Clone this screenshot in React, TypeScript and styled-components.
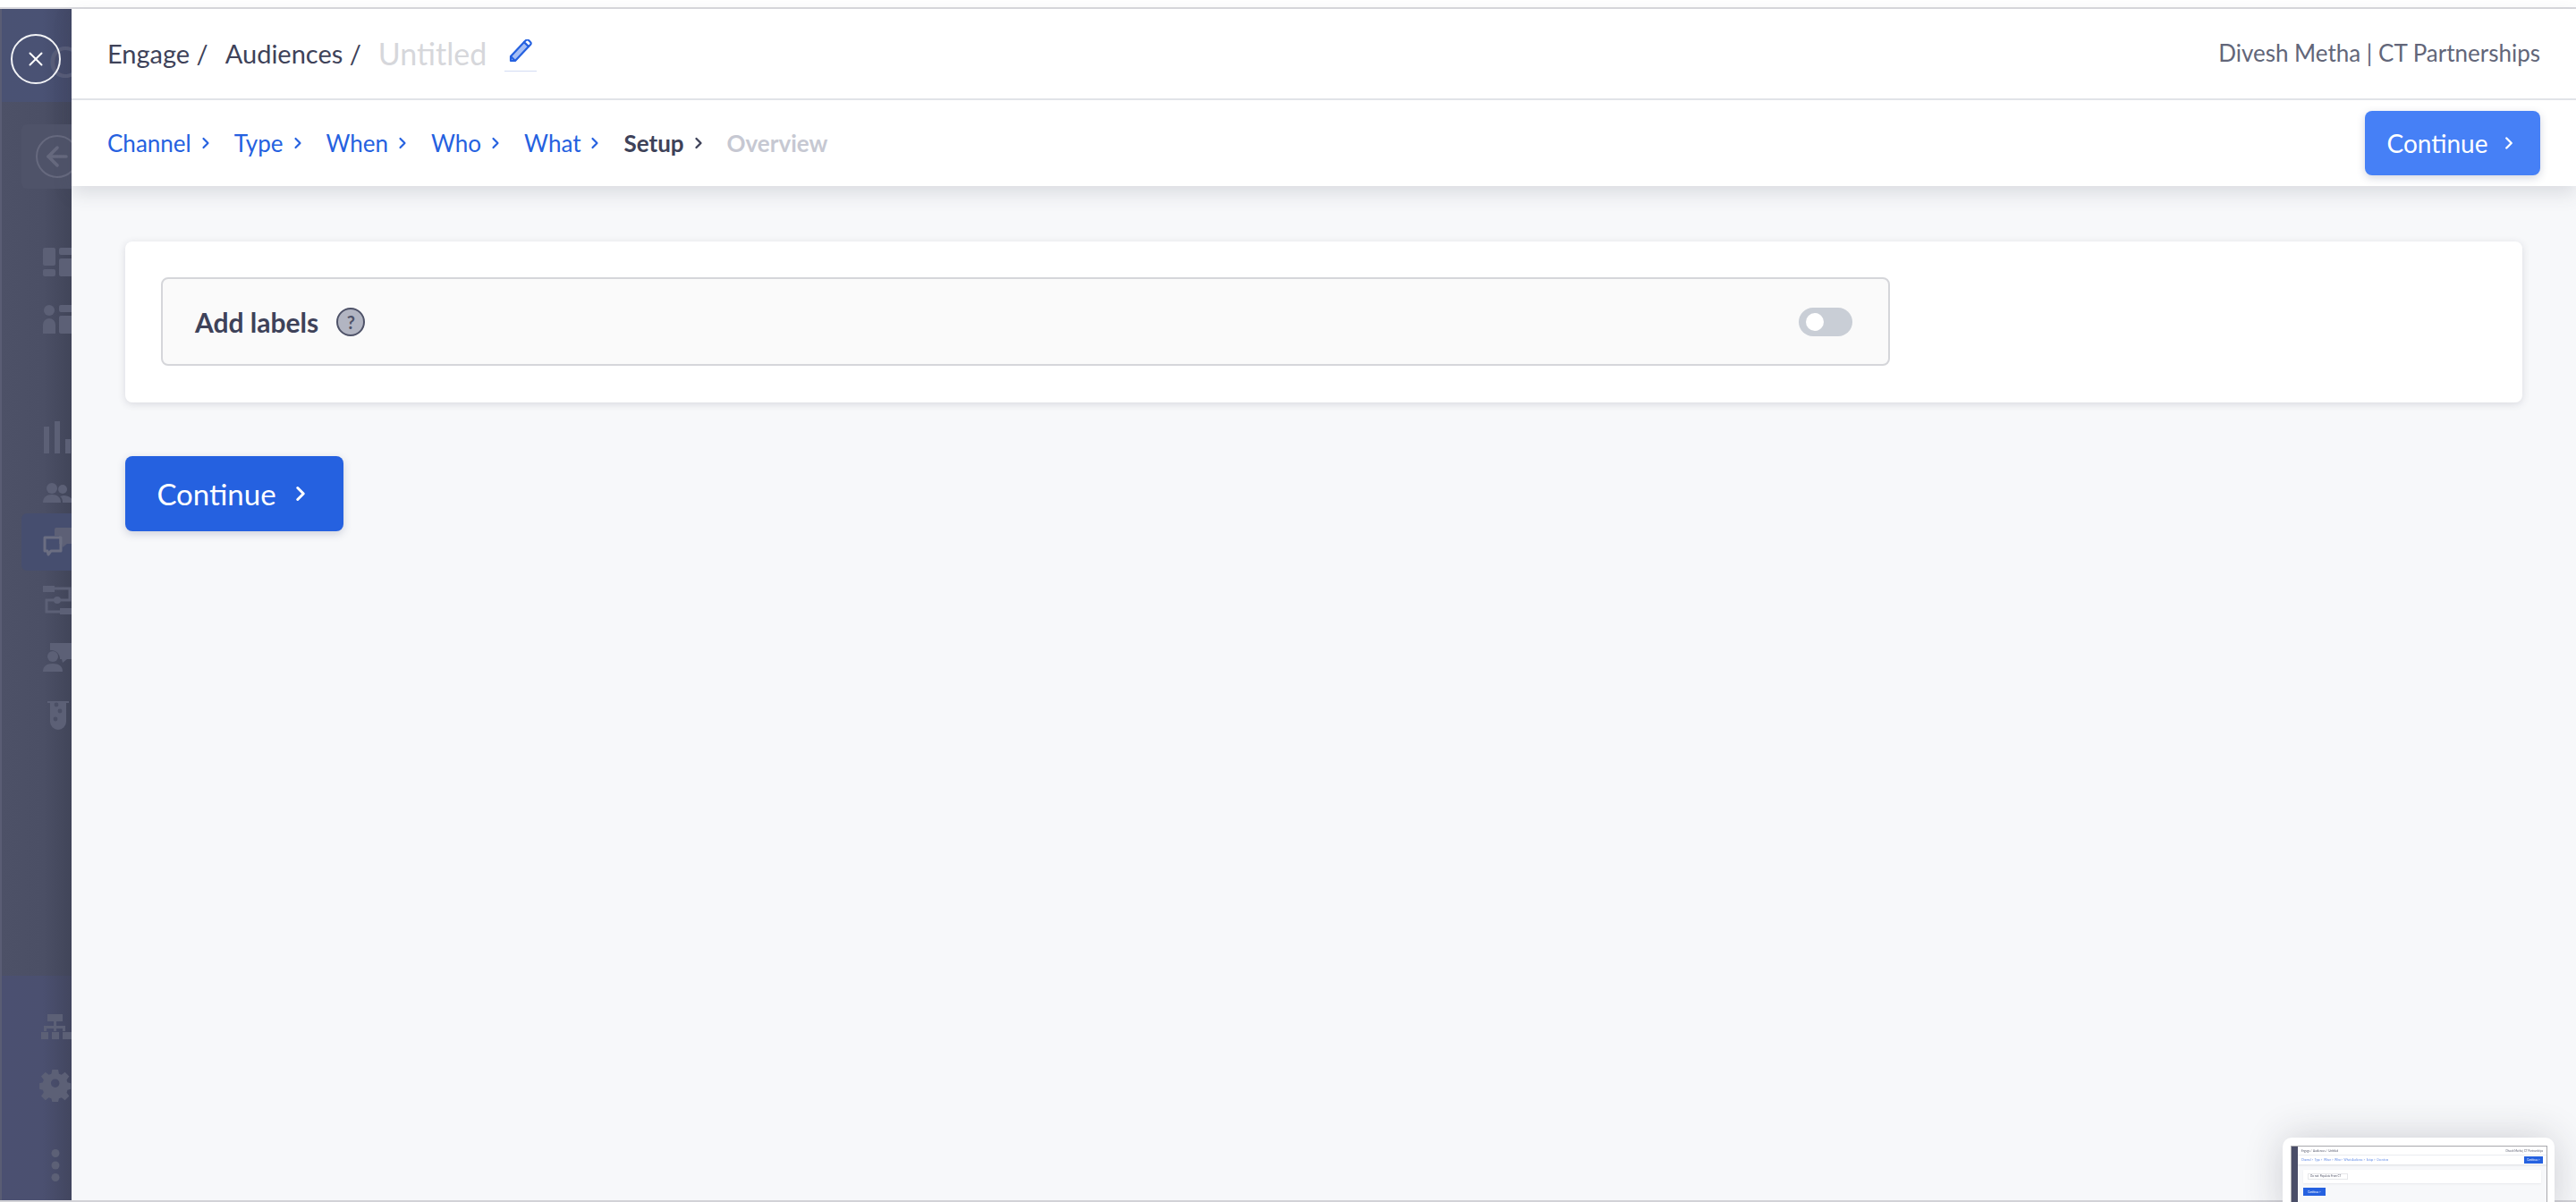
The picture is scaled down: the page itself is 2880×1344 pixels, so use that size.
import React from 'react';
import styled, { createGlobalStyle } from 'styled-components';
import { X, ArrowLeft, ChevronRight } from 'lucide-react';

const GlobalStyle = createGlobalStyle`
	html, body {
		margin: 0;
		padding: 0;
		background: #fff;
		font-family: "Lato", "Open Sans", sans-serif;
	}
	* {
		box-sizing: border-box;
	}
`

const Page = styled.div`
	position: relative;
	width: 2880px;
	height: 1344px;
	overflow: hidden;
	padding-top: 8px;
	display: flex;
	flex-direction: column;
`

const TopLine = styled.div`
	height: 2px;
	flex: none;
	background: #d9d9de;
`

const BottomLine = styled.div`
	height: 2px;
	flex: none;
	background: #d2d2d7;
`

const Shell = styled.div`
	flex: 1;
	display: flex;
	min-height: 0;
`

/* dimmed app nav that sits behind the drawer */
const Rail = styled.aside`
	position: relative;
	width: 80px;
	flex: none;
	overflow: hidden;
	display: flex;
	flex-direction: column;
	border-left: 2px solid #5a5d74;
	background: linear-gradient(90deg, #4d5167 0%, #4b4f65 60%, #414559 100%);
`

const RailTop = styled.div`
	height: 104px;
	flex: none;
	margin-left: -2px;
	position: relative;
	display: flex;
	align-items: flex-start;
	background: linear-gradient(90deg, #4a5273 0%, #4a5274 60%, #424866 100%);
`

const CloseRing = styled.div`
	position: absolute;
	left: 12px;
	top: 28px;
	width: 56px;
	height: 56px;
	border-radius: 50%;
	border: 2px solid #f2f3f6;
	color: #fff;
	display: flex;
	align-items: center;
	justify-content: center;
`

const GhostLetter = styled.span`
	position: absolute;
	left: 54px;
	top: 30px;
	font-size: 48px;
	color: #575c78;
`

const BackBox = styled.div`
	margin: 25px 0 0 22px;
	width: 80px;
	height: 72px;
	flex: none;
	border-radius: 6px;
	background: #4f5369;
	color: #66697e;
	display: flex;
	align-items: center;
	padding-left: 16px;
`

const BackCircle = styled.div`
	width: 48px;
	height: 48px;
	flex: none;
	border-radius: 50%;
	border: 2px solid #66697e;
	display: flex;
	align-items: center;
	justify-content: center;
`

const RailIcon = styled.svg<{ $top: number }>`
	display: block;
	flex: none;
	margin-top: ${(p) => p.$top}px;
	margin-left: 46px;
	overflow: visible;
	fill: #5c6076;
`

const ActiveItem = styled.div`
	margin: 12px 0 0 22px;
	width: 80px;
	height: 64px;
	flex: none;
	border-radius: 6px;
	background: #464e6f;
	padding: 16px 0 0 24px;
`

const RailBottom = styled.div`
	position: absolute;
	left: -2px;
	right: 0;
	bottom: 0;
	height: 251px;
	background: linear-gradient(90deg, #4b5071 0%, #4b5070 60%, #42465f 100%);
	padding-top: 43px;
`

const Main = styled.main`
	flex: 1;
	min-width: 0;
	background: #f7f8fa;
	display: flex;
	flex-direction: column;
`

const Header = styled.header`
	flex: none;
	background: #fff;
	box-shadow: 0 8px 20px rgba(70, 74, 95, 0.16);
	position: relative;
`

const TitleRow = styled.div`
	height: 102px;
	border-bottom: 2px solid #e1e3e8;
	padding: 0 40px;
	display: flex;
	align-items: center;
	color: #3e4259;
`

const Crumb = styled.span`
	font-size: 29px;
	margin-right: 19px;
	white-space: pre;
	position: relative;
	top: -1px;
`

const DraftName = styled.span`
	font-size: 34px;
	color: #d6d7db;
	position: relative;
	top: -1px;
`

const EditButton = styled.span`
	margin-left: 20px;
	width: 36px;
	height: 36px;
	flex: none;
	display: flex;
	align-items: flex-start;
	justify-content: center;
	border-bottom: 1px solid #d3dcf3;
	position: relative;
	top: 2px;
`

const Account = styled.span`
	margin-left: auto;
	font-size: 26px;
	color: #626679;
	position: relative;
	top: -1px;
`

const StepRow = styled.div`
	height: 96px;
	padding: 0 40px;
	display: flex;
	align-items: center;
`

const Step = styled.span<{ $state: 'done' | 'current' | 'next' }>`
	display: flex;
	align-items: center;
	gap: 6px;
	margin-right: 22px;
	font-size: 26px;
	font-weight: ${(p) => (p.$state === 'done' ? 400 : 700)};
	color: ${(p) => (p.$state === 'done' ? '#2561e0' : p.$state === 'current' ? '#3e4259' : '#c6c8d2')};
`

const Button = styled.button<{ $size: 'sm' | 'lg' }>`
	display: flex;
	align-items: center;
	justify-content: center;
	border: 0;
	border-radius: 8px;
	color: #fff;
	font-family: inherit;
	background: ${(p) => (p.$size === 'sm' ? '#4680f6' : '#2561e0')};
	width: ${(p) => (p.$size === 'sm' ? '196px' : '244px')};
	height: ${(p) => (p.$size === 'sm' ? '72px' : '84px')};
	font-size: ${(p) => (p.$size === 'sm' ? '28px' : '33px')};
	gap: ${(p) => (p.$size === 'sm' ? '12px' : '14px')};
	box-shadow: 0 3px 10px rgba(60, 70, 110, 0.22);
`

const TopButton = styled(Button)`
	margin-left: auto;
`

const Content = styled.div`
	padding: 62px 60px 0;
`

const Card = styled.section`
	width: 2680px;
	height: 180px;
	background: #fff;
	border-radius: 8px;
	padding: 40px;
	box-shadow: 0 2px 8px rgba(60, 64, 90, 0.16);
`

const LabelPanel = styled.div`
	width: 1933px;
	height: 99px;
	background: #fafafa;
	border: 2px solid #d5d6da;
	border-radius: 8px;
	padding: 0 40px 0 36px;
	display: flex;
	align-items: center;
`

const LabelText = styled.span`
	font-size: 30px;
	font-weight: 700;
	color: #3e4259;
`

const HelpBadge = styled.span`
	margin-left: 20px;
	width: 32px;
	height: 32px;
	flex: none;
	border-radius: 50%;
	background: #b2b5c2;
	border: 2px solid #4e5268;
	color: #4e5268;
	font-size: 20px;
	font-weight: 700;
	display: flex;
	align-items: center;
	justify-content: center;
`

const Toggle = styled.span`
	margin-left: auto;
	width: 60px;
	height: 32px;
	flex: none;
	border-radius: 16px;
	background: #c9ced6;
	padding: 6px 8px;
`

const Knob = styled.span`
	display: block;
	width: 20px;
	height: 20px;
	border-radius: 50%;
	background: #fff;
`

const BottomButton = styled(Button)`
	margin-top: 60px;
`

/* small preview of the previous step, bottom right */
const Preview = styled.div`
	position: absolute;
	left: 2552px;
	top: 1272px;
	width: 304px;
	height: 90px;
	background: #fff;
	border-radius: 10px;
	padding: 9px 8px 0 9px;
	box-shadow: 0 0 44px rgba(40, 42, 55, 0.2);
`

const PreviewFrame = styled.div`
	height: 100%;
	display: flex;
	border: 1px solid #a9a9ad;
	border-bottom: 0;
`

const PreviewRail = styled.div`
	width: 7px;
	flex: none;
	background: #4a4e68;
`

const PreviewMain = styled.div`
	flex: 1;
	background: #f7f8fa;
	filter: blur(0.3px);
`

const PreviewTitle = styled.div`
	height: 10px;
	background: #fff;
	border-bottom: 1px solid #eceef1;
	padding: 0 4px;
	display: flex;
	align-items: center;
	justify-content: space-between;
	font-size: 3px;
	color: #55586b;
	white-space: pre;
`

const PreviewSteps = styled.div`
	height: 10px;
	background: #fff;
	padding: 0 4px;
	display: flex;
	align-items: center;
	justify-content: space-between;
	font-size: 3px;
	color: #5a86e6;
	white-space: pre;
	box-shadow: 0 1px 2px rgba(70, 74, 95, 0.15);
`

const PreviewButton = styled.span`
	width: 21px;
	height: 8px;
	background: #2561e0;
	color: #fff;
	font-size: 3px;
	display: flex;
	align-items: center;
	justify-content: center;
`

const PreviewCard = styled.div`
	margin: 6px 6px 0 6px;
	height: 15px;
	background: #fff;
	border-radius: 1px;
	padding: 4px 5px;
	box-shadow: 0 1px 2px rgba(60, 64, 90, 0.08);
`

const PreviewSelect = styled.div`
	width: 45px;
	height: 7px;
	border: 1px solid #e6e7ea;
	font-size: 3px;
	line-height: 5px;
	padding-left: 2px;
	color: #55586b;
	white-space: pre;
`

const PreviewContinue = styled(PreviewButton)`
	margin: 5px 0 0 6px;
	width: 25px;
	height: 9px;
`

const STEPS = ['Channel', 'Type', 'When', 'Who', 'What'];

const App: React.FC = () => {
	return (
		<>
			<GlobalStyle />
			<Page>
				<TopLine />
				<Shell>
					<Rail>
						<RailTop>
							<GhostLetter>C</GhostLetter>
							<CloseRing>
								<X size={26} strokeWidth={1.8} />
							</CloseRing>
						</RailTop>
						<BackBox>
							<BackCircle>
								<ArrowLeft size={34} strokeWidth={2.6} />
							</BackCircle>
						</BackBox>
						<RailIcon $top={66} width="34" height="32" viewBox="0 0 34 32">
							<rect x="0" y="0" width="14" height="20" rx="2" />
							<rect x="0" y="24" width="14" height="8" rx="2" />
							<rect x="18" y="0" width="16" height="8" rx="2" />
							<rect x="18" y="12" width="16" height="20" rx="2" />
						</RailIcon>
						<RailIcon $top={32} width="34" height="32" viewBox="0 0 34 32">
							<circle cx="7" cy="6" r="6" />
							<path d="M0 32V22a7 7 0 0 1 14 0v10z" />
							<rect x="18" y="0" width="16" height="8" rx="2" />
							<rect x="18" y="12" width="16" height="20" rx="2" />
						</RailIcon>
						<RailIcon $top={98} width="34" height="36" viewBox="0 0 34 36">
							<rect x="1" y="6" width="6" height="30" />
							<rect x="13" y="0" width="6" height="36" />
							<rect x="25" y="20" width="6" height="16" />
						</RailIcon>
						<RailIcon $top={33} width="34" height="22" viewBox="0 0 34 22">
							<circle cx="10" cy="6" r="6" />
							<path d="M0 22c0-6 4-9 10-9s10 3 10 9z" />
							<circle cx="22" cy="7" r="5" />
							<path d="M23 14c6 0 10 3 11 8H22c0-3-1-6-3-7z" />
						</RailIcon>
						<ActiveItem>
							<svg width="34" height="32" viewBox="0 0 34 32" style={{ display: 'block', overflow: 'visible' }}>
								<path d="M13 2a2 2 0 0 1 2-2h17v18h-5l-5 4-1-4h-3V9H13z" fill="#5d6076" />
								<path d="M2 11h18v15H9l-3 4-1-4H2z" fill="none" stroke="#6b6e82" strokeWidth="3" strokeLinejoin="round" />
							</svg>
						</ActiveItem>
						<RailIcon $top={17} width="34" height="34" viewBox="0 0 34 34">
							<rect x="0" y="0" width="13" height="7" />
							<rect x="19" y="25" width="15" height="7" />
							<path d="M13 3h17v13H4v13h15" fill="none" stroke="#5c6076" strokeWidth="3" />
							<circle cx="16" cy="16" r="4" />
						</RailIcon>
						<RailIcon $top={30} width="34" height="32" viewBox="0 0 34 32">
							<circle cx="11" cy="15" r="6" />
							<path d="M0 32c0-6 4-9 11-9s11 3 11 9z" />
							<path d="M8 0h26v18H27l-5 4-1-4h-2c0-5-3-9-9-10H8z" />
						</RailIcon>
						<RailIcon $top={32} width="24" height="33" viewBox="0 0 24 33" style={{ marginLeft: '51px' }}>
							<path d="M0 1h24v2h-3v21a9 9 0 0 1-18 0V3H0z" />
							<circle cx="10" cy="5" r="2.4" fill="#4b4f65" />
							<circle cx="14" cy="12" r="2.4" fill="#4b4f65" />
							<circle cx="9" cy="21" r="2.4" fill="#4b4f65" />
						</RailIcon>
						<RailBottom>
							<RailIcon $top={0} width="34" height="28" viewBox="0 0 34 28">
								<rect x="7" y="0" width="17" height="8" />
								<path d="M14 8h3v5h10v6h-3v-3H17v3h-3v-3H6v3H3v-6h11z" />
								<rect x="0" y="20" width="8" height="8" />
								<rect x="12" y="20" width="8" height="8" />
								<rect x="24" y="20" width="10" height="8" />
							</RailIcon>
							<RailIcon $top={34} width="34" height="32" viewBox="0 0 34 32">
								<path fillRule="evenodd" d="M13 0h7l1 5 3 1 4-3 5 5-3 4 1 3 4 1v7l-4 1-1 3 3 4-5 5-4-3-3 1-1 4h-7l-1-4-3-1-4 3-5-5 3-4-1-3-4-1v-7l4-1 1-3-3-4 5-5 4 3 3-1zm3.500 11a5 5 0 1 0 0 10 5 5 0 0 0 0-10z" transform="scale(0.95)" />
							</RailIcon>
							<RailIcon $top={57} width="34" height="36" viewBox="0 0 34 36">
								<circle cx="16" cy="4.500" r="4.500" />
								<circle cx="16" cy="18" r="4.500" />
								<circle cx="16" cy="31.500" r="4.500" />
							</RailIcon>
						</RailBottom>
					</Rail>
					<Main>
						<Header>
							<TitleRow>
								<Crumb>Engage /</Crumb>
								<Crumb>Audiences /</Crumb>
								<DraftName>Untitled</DraftName>
								<EditButton>
									<svg width="28" height="26" viewBox="0 0 28 26">
										<path d="M3 19 18 3l5 5L8 24H3z" fill="#a6bff5" stroke="#2561e0" strokeWidth="2.200" strokeLinejoin="round" />
										<path d="m18 3 2-2a2 2 0 0 1 3 0l2 2a2 2 0 0 1 0 3l-2 2z" fill="#fff" stroke="#2561e0" strokeWidth="2.200" strokeLinejoin="round" />
										<path d="m3 19 5 5" stroke="#2561e0" strokeWidth="2.200" />
									</svg>
								</EditButton>
								<Account>Divesh Metha | CT Partnerships</Account>
							</TitleRow>
							<StepRow>
								{STEPS.map((step) => (
									<Step key={step} $state="done">
										{step}
										<ChevronRight size={20} strokeWidth={2.6} />
									</Step>
								))}
								<Step $state="current">
									Setup
									<ChevronRight size={20} strokeWidth={2.8} />
								</Step>
								<Step $state="next">Overview</Step>
								<TopButton $size="sm">
									Continue
									<ChevronRight size={22} strokeWidth={2.6} />
								</TopButton>
							</StepRow>
						</Header>
						<Content>
							<Card>
								<LabelPanel>
									<LabelText>Add labels</LabelText>
									<HelpBadge>?</HelpBadge>
									<Toggle>
										<Knob />
									</Toggle>
								</LabelPanel>
							</Card>
							<BottomButton $size="lg">
								Continue
								<ChevronRight size={26} strokeWidth={2.8} />
							</BottomButton>
						</Content>
					</Main>
				</Shell>
				<BottomLine />
				<Preview>
					<PreviewFrame>
						<PreviewRail />
						<PreviewMain>
							<PreviewTitle>
								<span>Engage /  Audiences /  Untitled</span>
								<span>Divesh Metha | CT Partnerships</span>
							</PreviewTitle>
							<PreviewSteps>
								<span>Channel &gt;  Type &gt;  When &gt;  Who &gt;  What: Audience &gt;  Setup &gt;  Overview</span>
								<PreviewButton>Continue &gt;</PreviewButton>
							</PreviewSteps>
							<PreviewCard>
								<PreviewSelect>Do not: Populate From CT</PreviewSelect>
							</PreviewCard>
							<PreviewContinue>Continue &gt;</PreviewContinue>
						</PreviewMain>
					</PreviewFrame>
				</Preview>
			</Page>
		</>
	);
};

export default App;
